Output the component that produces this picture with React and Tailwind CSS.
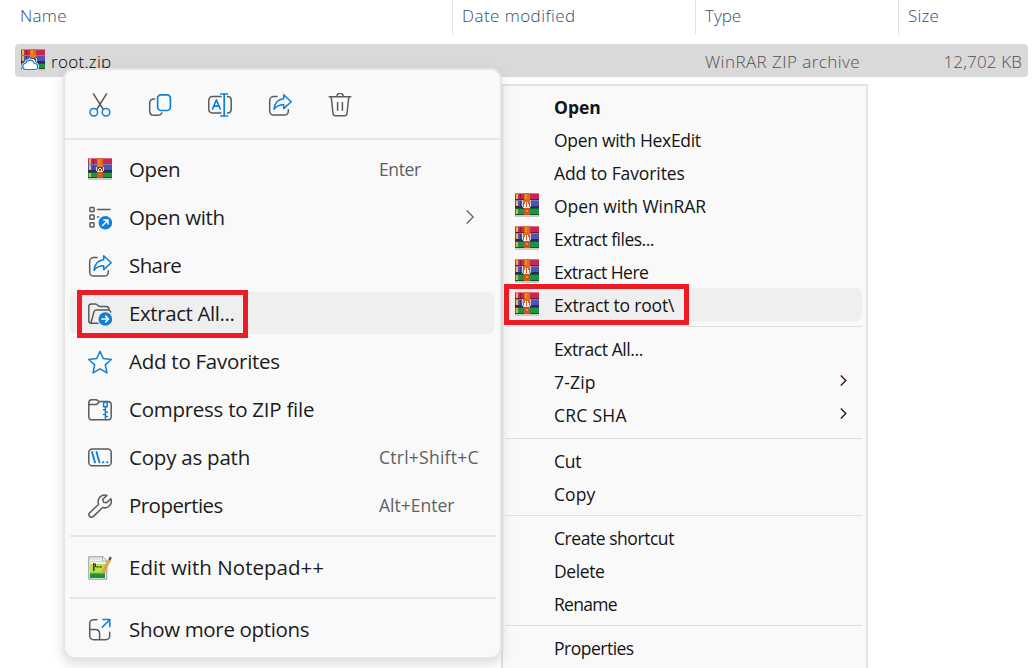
const INK = '#5a5a5a';
const BLUE = '#0f7fd8';

function Icon({ children, className = '' }) {
  return (
    <svg
      viewBox="0 0 24 24"
      className={`h-6 w-6 shrink-0 ${className}`}
      fill="none"
      stroke={INK}
      strokeWidth="1.5"
      strokeLinecap="round"
      strokeLinejoin="round"
    >
      {children}
    </svg>
  );
}

const CutIcon = () => (
  <Icon>
    <path d="M5.5 0.8 15 16M18.5 0.8 9 16" />
    <g stroke={BLUE}>
      <circle cx="5.8" cy="19.3" r="3.8" />
      <circle cx="18" cy="19.3" r="3.8" />
    </g>
  </Icon>
);

const CopyIcon = () => (
  <Icon>
    <path d="M6.5 6C3.5 6 1.7 7.5 1.7 10v8.5A4 4 0 0 0 5.7 22.3h3.8c2.4 0 3.8-.8 4.3-2.4" />
    <rect x="9.6" y="1.9" width="12.8" height="15.6" rx="3.4" stroke={BLUE} strokeWidth="1.7" />
  </Icon>
);

const RenameIcon = () => (
  <Icon>
    <path d="M13 3.5H4.5A3.8 3.8 0 0 0 .8 7.3v9A3.8 3.8 0 0 0 4.5 20H13M19.5 3.5c2.4 0 3.7 1.6 3.7 3.8v9c0 2.2-1.3 3.7-3.7 3.7" />
    <g stroke={BLUE} strokeWidth="1.7">
      <path d="M4.6 16 8.4 6.8 12.2 16M5.9 13.2h5" />
      <path d="M16.2 1v22M12.9 1h6.6M12.9 23h6.6" />
    </g>
  </Icon>
);

const ShareIcon = () => (
  <Icon>
    <path d="M9 3.6H5.5A3.9 3.9 0 0 0 1.7 7.5v10.7a3.9 3.9 0 0 0 3.9 3.9h10.8a3.9 3.9 0 0 0 3.9-3.9v-1.5" />
    <path
      stroke={BLUE}
      d="M15.7 1.8 23.2 8.8 15.7 15.6V11.7C11.4 11.6 8.7 12.8 6 16.2 6.7 10.3 10 6.4 15.7 5.8Z"
    />
  </Icon>
);

const TrashIcon = () => (
  <Icon>
    <path d="M1.2 3.8h21.6M8.8 3.5a3.2 3.2 0 0 1 6.4 0M3.2 4l1.8 16.5c.2 1.5 1 2.3 2.5 2.3h9c1.5 0 2.3-.8 2.5-2.3L20.8 4M9.6 9.5v7.7M14.4 9.5v7.7" />
  </Icon>
);

const OpenWithIcon = () => (
  <Icon>
    <rect x="1.9" y="1.4" width="4.2" height="4.2" rx=".8" />
    <rect x="1.9" y="9" width="4.2" height="4.2" rx=".8" />
    <rect x="1.9" y="16.7" width="4.2" height="4.2" rx=".8" />
    <path d="M9.6 3.4h12.3M9.6 11h1" />
    <circle cx="17.3" cy="16.8" r="6.8" fill={BLUE} stroke="none" />
    <path d="m14.6 19.5 5.2-5.3M15.8 13.9h4.2v4.2" stroke="#fff" />
  </Icon>
);

const ExtractIcon = () => (
  <Icon>
    <path d="M10 21.3H3.3C1.6 21.3.8 20.4.8 18.8V4.6C.8 3 1.7 2 3.3 2h4.2c1.8 0 2.6 2.6 4.4 2.6h5.7c2.3 0 3.5 1.3 3.5 3.4M3 20.8 6 9.9C6.4 8.6 7.2 8 8.6 8H20c1.4 0 2.4.6 2.8 2" />
    <circle cx="17.3" cy="17" r="6.8" fill={BLUE} stroke="none" />
    <path d="M13.9 17h6.5M17.7 14.1l2.9 2.9-2.9 2.9" stroke="#fff" />
  </Icon>
);

const StarIcon = () => (
  <Icon>
    <path
      stroke={BLUE}
      d="m12 1.2 3.3 7.4 8 .9-6 5.4 1.7 7.9-7-4-7 4 1.7-7.9-6-5.4 8-.9Z"
    />
  </Icon>
);

const ZipIcon = () => (
  <Icon>
    <path d="M15 3.6h4.7c2.2 0 3.5 1.3 3.5 3.4v11.4c0 2.1-1.3 3.4-3.5 3.4H4.3c-2.2 0-3.5-1.3-3.5-3.4V5c0-2 1.1-3.3 3-3.3h4.1c1.8 0 2.5 1.9 4 1.9H15M.8 6.6h7c2.2 0 2.6-3 4.5-3" />
    <g stroke={BLUE}>
      <rect x="15.6" y="4.2" width="3.6" height="4.6" />
      <path d="M17.4 9v11.6M15.5 11.8h1.7M17.6 14.2h1.8M15.5 16.4h1.7M17.6 18.6h1.8" />
    </g>
  </Icon>
);

const PathIcon = () => (
  <Icon>
    <rect x=".8" y="3" width="22.4" height="16.8" rx="3.4" />
    <path d="m4 6 3 10.4M8.5 6l3 10.4" stroke={BLUE} strokeWidth="1.9" />
    <path d="M15 16.2h.3M19.2 16.2h.3" stroke={BLUE} strokeWidth="2" />
  </Icon>
);

const WrenchIcon = () => (
  <Icon>
    <path d="M19 1.4a6.6 6.6 0 0 0-8.3 8.8L1.7 18.7a2.6 2.6 0 0 0 3.7 3.7l9.3-8.9a6.6 6.6 0 0 0 8.1-8.8l-4.2 4.1-3-.6-.8-3Z" />
  </Icon>
);

const MoreIcon = () => (
  <Icon>
    <path d="M9 1.7H5.5a3.9 3.9 0 0 0-3.8 3.9v12.2a3.9 3.9 0 0 0 3.9 3.9h12.2a3.9 3.9 0 0 0 3.9-3.9v-3.5M1.8 11.6h6a3.7 3.7 0 0 1 3.8 3.7v6.2" />
    <path d="m13.8 9.6 7.9-7.9M14.2 1.5h7.6v7.8" stroke={BLUE} strokeLinecap="butt" strokeLinejoin="miter" />
  </Icon>
);

function BooksIcon({ className = 'h-6', buckle = true }) {
  return (
    <svg
      viewBox="0 0 24 24"
      preserveAspectRatio="none"
      shapeRendering="crispEdges"
      className={`w-6 shrink-0 ${className}`}
    >
      <rect y="22" width="24" height="2" fill="#c9c9c9" />
      <rect width="24" height="7" fill="#c8284b" />
      <rect width="24" height="1" fill="#e0708a" />
      <rect y="6" width="24" height="1" fill="#7b1626" />
      <rect y="7" width="24" height="8" fill="#5154b4" />
      <rect y="7" width="24" height="1" fill="#7377cc" />
      <rect y="13" width="24" height="2" fill="#30285c" />
      <rect y="15" width="24" height="7" fill="#1c9444" />
      <rect y="15" width="24" height="1" fill="#145c30" />
      <rect y="21" width="24" height="1" fill="#105427" />
      <rect x="1" y="1" width="2" height="5" fill="#e8b63c" />
      <rect x="1" y="8" width="2" height="5" fill="#e8c048" />
      <rect x="1" y="16" width="2" height="5" fill="#d8b83c" />
      <rect x="5" y="1" width="1" height="5" fill="#8d1830" />
      <rect x="5" y="8" width="1" height="5" fill="#37397e" />
      <rect x="9" width="6" height="7" fill="#df6b20" />
      <rect x="10" y="1" width="2" height="5" fill="#f08c28" />
      <rect x="9" y="15" width="6" height="7" fill="#d0521c" />
      <rect x="11" y="17" width="2" height="2" fill="#f09030" />
      {buckle ? (
        <>
          <rect x="7" y="7" width="1" height="7" fill="#d4d0dc" />
          <rect x="8" y="7" width="7" height="3" fill="#dc6a24" />
          <rect x="8" y="10" width="7" height="4" fill="#d8542c" />
          <rect x="15" y="7" width="1" height="7" fill="#c8c4d4" />
          <rect x="10" y="9" width="1" height="4" fill="#fff" />
          <rect x="12" y="9" width="1" height="4" fill="#fff" />
          <rect x="9" y="11" width="2" height="3" fill="#fff" />
          <rect x="12" y="11" width="2" height="3" fill="#fff" />
          <rect x="8" y="14" width="7" height="1" fill="#e4e0e4" />
        </>
      ) : (
        <>
          <rect x="9" y="7" width="6" height="3" fill="#e07a24" />
          <rect x="8" y="10" width="1" height="4" fill="#d8d4d8" />
          <rect x="15" y="10" width="1" height="4" fill="#d8d4d8" />
          <rect x="9" y="10" width="6" height="1" fill="#6c3a38" />
          <rect x="9" y="11" width="6" height="3" fill="#7c4440" />
          <rect x="11" y="11" width="2" height="1" fill="#fff" />
          <rect x="10" y="12" width="1" height="2" fill="#fff" />
          <rect x="13" y="12" width="1" height="2" fill="#fff" />
          <rect x="9" y="14" width="6" height="1" fill="#d8d4d8" />
        </>
      )}
    </svg>
  );
}

const NotepadIcon = () => (
  <svg viewBox="0 0 24 24" className="h-6 w-6 shrink-0">
    <path d="M.8 .8h14l4 4v18.4H.8Z" fill="#eef2f6" stroke="#8d969c" />
    <path d="M2 3h11M2 5.5h12" stroke="#c6d8e6" />
    <path d="M14.5 1v4h4" fill="#fff" stroke="#9aa" />
    <rect x="2" y="8" width="16" height="9" fill="#bde04a" />
    <path d="M2 18l1-2 1 2 1-2 1 2 1-2 1 2 1-2 1 2 1-2 1 2 1-2 1 2 1-2 1 2 1-2V22H2Z" fill="#169238" />
    <path d="M5.8 7v8" stroke="#2c3a2c" strokeWidth="1.5" />
    <path d="M7.5 7.5v3.6" stroke="#2c3a2c" strokeWidth="1" />
    <path d="M8.3 10.8h2.2M11.3 10.8h2.4" stroke="#2c3a2c" strokeWidth="1.3" />
    <path d="m13.8 18.6.6-3.6 6-11.6 2.1 1.1-6 11.4Z" fill="#f0a43a" stroke="#d8862a" strokeWidth=".5" />
    <path d="m20.4 3.4 1.3-2.8 2.1 1.1-1.3 2.8Z" fill="#5b4b48" />
  </svg>
);

const ACTIONS = [CutIcon, CopyIcon, RenameIcon, ShareIcon, TrashIcon];

const OpenBooks = () => <BooksIcon buckle={false} className="h-[22px] -translate-y-px" />;

const MAIN_GROUPS = [
  [
    { label: 'Open', icon: OpenBooks, hint: 'Enter', track: 'tracking-[-0.37px]', hintTrack: 'tracking-[-0.4px]' },
    { label: 'Open with', icon: OpenWithIcon, submenu: true, track: 'tracking-[-0.34px]' },
    { label: 'Share', icon: ShareIcon, track: 'tracking-[-0.6px]' },
    { label: 'Extract All...', icon: ExtractIcon, active: true, track: 'tracking-[-0.4px]' },
    { label: 'Add to Favorites', icon: StarIcon, track: 'tracking-[-0.26px]' },
    { label: 'Compress to ZIP file', icon: ZipIcon, track: 'tracking-[-0.26px]' },
    { label: 'Copy as path', icon: PathIcon, hint: 'Ctrl+Shift+C', track: 'tracking-[-0.22px]', hintTrack: 'tracking-[0.25px]' },
    { label: 'Properties', icon: WrenchIcon, hint: 'Alt+Enter', track: 'tracking-[-0.55px]', hintTrack: 'tracking-normal' },
  ],
  [{ label: 'Edit with Notepad++', icon: NotepadIcon, track: 'tracking-[0.03px]' }],
  [{ label: 'Show more options', icon: MoreIcon, track: 'tracking-[-0.33px]' }],
];

const CLASSIC_GROUPS = [
  {
    className: '',
    rows: [
      { label: 'Open', track: 'tracking-normal', bold: true },
      { label: 'Open with HexEdit', track: 'tracking-[-0.3px]' },
      { label: 'Add to Favorites', track: 'tracking-[-0.1px]' },
      { label: 'Open with WinRAR', rar: true, track: 'tracking-[-0.05px]' },
      { label: 'Extract files...', rar: true, track: 'tracking-[-0.5px]' },
      { label: 'Extract Here', rar: true, track: 'tracking-[-0.55px]' },
      { label: 'Extract to root\\', rar: true, active: true, track: 'tracking-[-0.2px]' },
    ],
  },
  {
    className: 'mt-[5px] border-t pt-[5px]',
    rows: [
      { label: 'Extract All...', track: 'tracking-[-0.43px]' },
      { label: '7-Zip', submenu: true, track: 'tracking-[0.2px]' },
      { label: 'CRC SHA', submenu: true, track: 'tracking-[0.25px]' },
    ],
  },
  {
    className: 'mt-[7px] border-t pt-[5px]',
    rows: [
      { label: 'Cut', track: 'tracking-[-0.2px]' },
      { label: 'Copy', track: 'tracking-[0.1px]' },
    ],
  },
  {
    className: 'mt-[5px] border-t pt-[5px]',
    rows: [
      { label: 'Create shortcut', track: 'tracking-[-0.45px]' },
      { label: 'Delete', track: 'tracking-[-0.4px]' },
      { label: 'Rename', track: 'tracking-[-0.7px]' },
    ],
  },
  {
    className: 'mt-[5px] border-t pt-[5px]',
    rows: [{ label: 'Properties', track: 'tracking-[-0.5px]' }],
  },
];

function MainRow({ label, icon: RowIcon, hint, hintTrack, submenu, active, track }) {
  return (
    <div className="relative flex h-12 items-center">
      <div
        className={`ml-[5px] mr-1.5 flex h-[42px] grow -translate-y-px items-center rounded-md pl-[18px] ${active ? 'bg-[#efefef]' : ''}`}
      >
        <span className="translate-y-px">
          <RowIcon />
        </span>
        <span className={`ml-[17px] w-[250px] whitespace-nowrap text-[20.5px] text-[#1b1b1b] ${track}`}>{label}</span>
        {hint && <span className={`whitespace-nowrap text-[17.5px] text-[#5f5f5f] ${hintTrack}`}>{hint}</span>}
        {submenu && (
          <svg viewBox="0 0 8 14" className="ml-[87px] h-3.5 w-2" fill="none" stroke="#5f5f5f" strokeWidth="1.3">
            <path d="m.7.5 6.5 6.5L.7 13.5" />
          </svg>
        )}
      </div>
      {active && <div className="absolute left-3 top-0 h-12 w-[171px] border-[5px] border-[#ed1c24]" />}
    </div>
  );
}

function ClassicRow({ label, rar, submenu, active, bold, track }) {
  return (
    <div className="relative flex h-[33px]">
      <div className={`ml-[3px] mr-1 flex grow items-center rounded-md pl-[9px] ${active ? 'bg-[#efefef]' : ''}`}>
        <div className="flex w-[39px] items-center">{rar && <BooksIcon className="h-6 -translate-y-px" />}</div>
        <span
          className={`grow translate-y-px whitespace-nowrap text-[17.5px] ${bold ? 'font-bold' : ''} text-[#141414] ${track}`}
        >
          {label}
        </span>
        {submenu && (
          <svg viewBox="0 0 7 11" className="mr-[15px] h-[11px] w-[7px] -translate-y-px" fill="none" stroke="#3c1420" strokeWidth="1.4">
            <path d="M.8.6 5.8 5.5.8 10.4" />
          </svg>
        )}
      </div>
      {active && <div className="absolute left-[1px] -top-1 h-[41px] w-[185px] border-[5px] border-[#ed1c24]" />}
    </div>
  );
}

function Column({ label, className }) {
  return <div className={`flex h-[35px] items-center pb-[3px] ${className}`}>{label}</div>;
}

export default function App() {
  return (
    <div className="relative h-[668px] w-[1032px] overflow-hidden bg-white font-['Open_Sans','Noto_Sans',sans-serif]">
      <div className="flex text-[17px] font-light text-[#334d74]">
        <Column label="Name" className="w-[452px] pl-5 tracking-[0.3px]" />
        <Column label="Date modified" className="w-[243px] border-l border-[#e2e2e2] pl-[9px] tracking-[0.45px]" />
        <Column label="Type" className="w-[203px] border-l border-[#e2e2e2] pl-[9px]" />
        <Column label="Size" className="grow border-l border-[#e2e2e2] pl-[9px] tracking-[0.2px]" />
      </div>
      <div className="ml-[15px] mr-[13px] mt-[9px] flex h-[33px] w-[1013px] items-center rounded-sm bg-[#d9d9d9] pl-1.5 text-[17px] font-light text-[#505050]">
        <div className="relative h-6 w-6">
          <BooksIcon className="h-[22px]" buckle={false} />
          <svg viewBox="0 0 18 13" className="absolute bottom-0.5 left-0 h-[13px] w-[18px]">
            <path
              d="M4.5 12A3.6 3.6 0 0 1 4.3 5 5 5 0 0 1 13.6 5.3 3.4 3.4 0 0 1 14 12Z"
              fill="#fff"
              stroke="#fff"
              strokeWidth="2.4"
            />
            <path
              d="M4.5 11.7A3.3 3.3 0 0 1 4.5 5.2 4.7 4.7 0 0 1 13.4 5.5 3.1 3.1 0 0 1 13.8 11.7Z"
              fill="#fff"
              stroke={BLUE}
              strokeWidth="1.2"
            />
          </svg>
        </div>
        <span className="ml-1.5 w-[654px] translate-y-px tracking-[0.3px] text-black">root.zip</span>
        <span className="grow translate-y-px whitespace-nowrap tracking-[0.45px]">WinRAR ZIP archive</span>
        <span className="translate-y-px pr-[6px] tracking-[0.15px]">12,702 KB</span>
      </div>

      <div className="absolute left-[501px] top-[84px] h-[600px] w-[367px] border-2 border-[#e3e3e3] bg-[#f9f9f9] pt-1">
        {CLASSIC_GROUPS.map((group, i) => (
          <div key={i} className={`ml-[3px] mr-1 border-[#dfdfdf] [&>div]:-ml-[3px] [&>div]:-mr-1 ${group.className}`}>
            {group.rows.map((row) => (
              <ClassicRow key={row.label} {...row} />
            ))}
          </div>
        ))}
      </div>

      <div className="absolute left-[63px] top-[68px] h-[591px] w-[439px] rounded-[11px] border-2 border-[#e5e5e5] bg-[#f9f9f9] shadow-[0_5px_12px_rgba(0,0,0,0.14)]">
        <div className="flex h-[70px] items-center gap-9 border-b-2 border-[#e6e6e6] pl-[23px] pt-px">
          {ACTIONS.map((Action, i) => (
            <Action key={i} />
          ))}
        </div>
        {MAIN_GROUPS.map((group, i) => (
          <div key={i} className={i === 0 ? 'pt-1.5' : 'ml-[5px] mr-1 mt-[5px] border-t-2 border-[#e6e6e6] pt-[7px] [&>div]:-ml-[5px] [&>div]:-mr-1'}>
            {group.map((row) => (
              <MainRow key={row.label} {...row} />
            ))}
          </div>
        ))}
      </div>

      <div className="pointer-events-none absolute left-[504px] top-[284px] h-[41px] w-[185px] border-[5px] border-[#ed1c24]" />
    </div>
  );
}
